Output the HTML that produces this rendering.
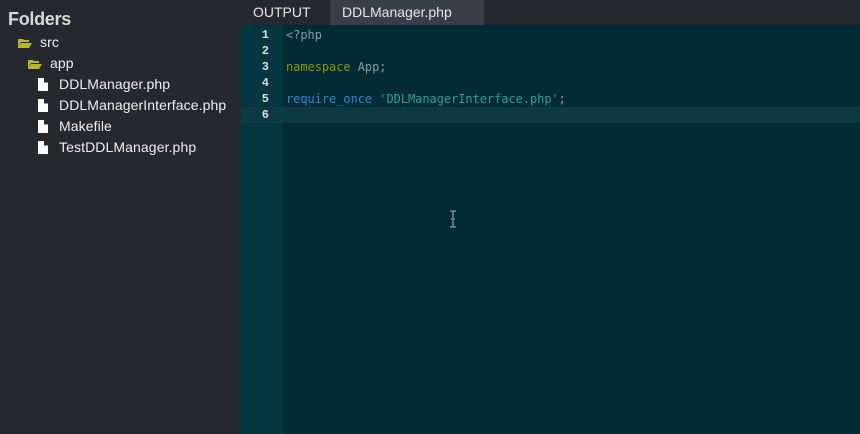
<!DOCTYPE html>
<html><head><style>
body{margin:0;width:860px;height:434px;overflow:hidden;background:#022b35;font-family:"Liberation Sans",sans-serif;position:relative}
#side{position:absolute;left:0;top:0;width:241px;height:434px;background:#24282f;color:#e6e6e6}
#side h1{position:absolute;left:8px;top:9px;margin:0;font-size:18px;font-weight:bold;color:#d8d8d8;letter-spacing:-0.3px}
.it{position:absolute;font-size:14px;color:#eee;white-space:nowrap;letter-spacing:0.1px}
.fo{display:inline-block;width:14px;height:9px;margin-right:8px;vertical-align:-1px}
.fi{display:inline-block;width:10px;height:13px;margin-right:11px;vertical-align:-2px;background:#fff;clip-path:polygon(0 0,60% 0,60% 35%,100% 35%,100% 100%,0 100%)}
#tabs{position:absolute;left:241px;top:0;width:619px;height:25px;background:#24282f}
.tab{position:absolute;top:0;height:25px;line-height:25px;font-size:14px;color:#e6e6e6;letter-spacing:0}
#gut{position:absolute;left:241px;top:25px;width:42px;height:409px;background:#033641}
#code{position:absolute;left:283px;top:25px;right:0;bottom:0;background:#022b35}
.ln{position:absolute;left:241px;width:28px;text-align:right;font:bold 12px "Liberation Mono",monospace;color:#d4dde0}
.cl{position:absolute;left:286px;font:12px "DejaVu Sans Mono","Liberation Mono",monospace;color:#8a9a9c;white-space:pre;letter-spacing:-0.05px}
</style></head><body>
<div id="side">
<h1>Folders</h1>
<div class="it" style="left:18px;top:34px"><svg class="fo" viewBox="0 0 14 9"><path d="M0 0h5l1 1h5v2H3L0 9z M3 4h11l-3 5H0z" fill="#b9b62a"/></svg>src</div>
<div class="it" style="left:28px;top:55px"><svg class="fo" viewBox="0 0 14 9"><path d="M0 0h5l1 1h5v2H3L0 9z M3 4h11l-3 5H0z" fill="#b9b62a"/></svg>app</div>
<div class="it" style="left:38px;top:76px"><span class="fi"></span>DDLManager.php</div>
<div class="it" style="left:38px;top:97px"><span class="fi"></span>DDLManagerInterface.php</div>
<div class="it" style="left:38px;top:118px"><span class="fi"></span>Makefile</div>
<div class="it" style="left:38px;top:139px"><span class="fi"></span>TestDDLManager.php</div>
</div>
<div id="tabs">
<div class="tab" style="left:12px">OUTPUT</div>
<div class="tab" style="left:89px;width:154px;background:#3a3e48;padding-left:12px;box-sizing:border-box">DDLManager.php</div>
</div>
<div id="gut"></div>
<div id="code"></div>
<div style="position:absolute;left:241px;top:107px;width:619px;height:16px;background:#0b3a43"></div>
<div class="ln" style="top:28px">1</div>
<div class="ln" style="top:44px">2</div>
<div class="ln" style="top:60px">3</div>
<div class="ln" style="top:76px">4</div>
<div class="ln" style="top:92px">5</div>
<div class="ln" style="top:108px">6</div>
<div class="cl" style="top:28px">&lt;?php</div>
<div class="cl" style="top:60px"><span style="color:#859900">namespace</span> App;</div>
<div class="cl" style="top:92px"><span style="color:#268bd2">require_once</span> <span style="color:#2aa198">'DDLManagerInterface.php'</span>;</div>
<svg style="position:absolute;left:448px;top:210px" width="10" height="18" viewBox="0 0 10 18"><path d="M2 1h2l1 1 1-1h2M5 2v6M3 9h4M5 10v6M2 17h2l1-1 1 1h2" stroke="#8fa5ae" fill="none" stroke-width="1.2"/></svg>
</body></html>
